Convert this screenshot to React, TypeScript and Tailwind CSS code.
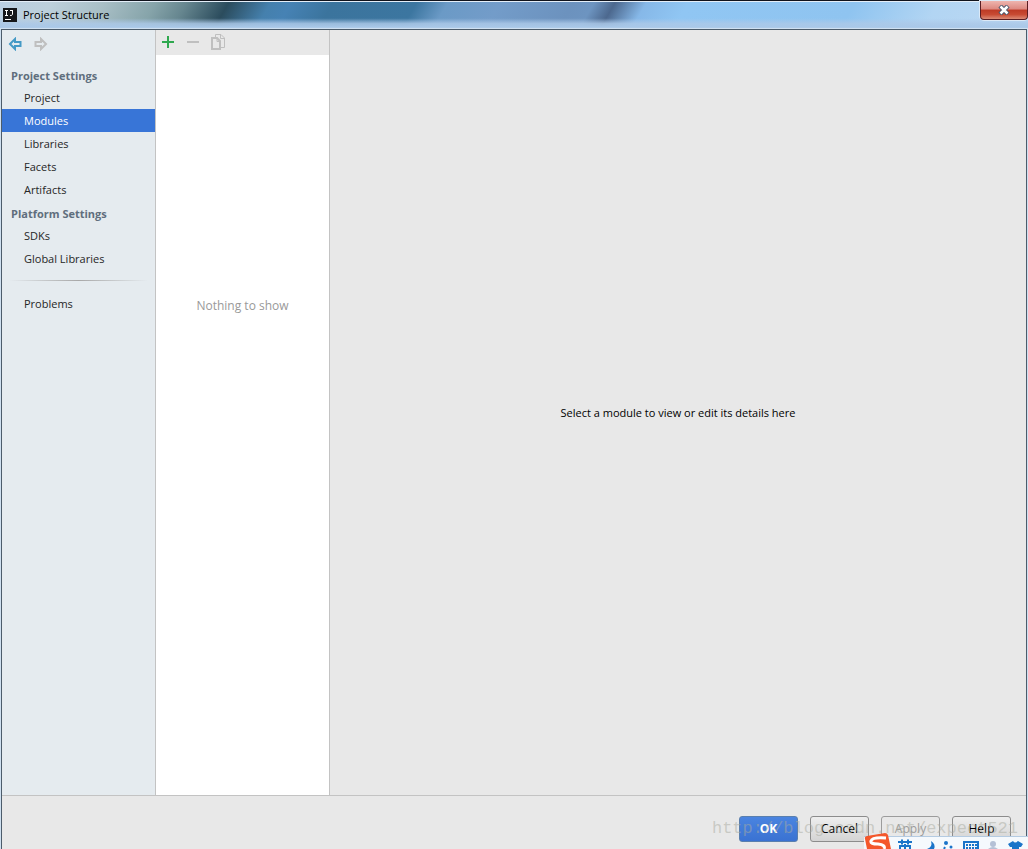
import React, { useState } from 'react'
import clsx from 'clsx'

const projectItems = ['Project', 'Modules', 'Libraries', 'Facets', 'Artifacts']
const platformItems = ['SDKs', 'Global Libraries']

type ItemProps = {
  name: string
  selected: boolean
  onSelect: (name: string) => void
}

const NavItem = ({ name, selected, onSelect }: ItemProps) => (
  <button
    type="button"
    onClick={() => onSelect(name)}
    className={clsx(
      'flex h-[23px] w-full items-center pl-[22px] text-left text-[11px]',
      selected ? 'bg-[#3875d7] text-white' : 'text-[#262626]'
    )}
  >
    {name}
  </button>
)

const NavTitle = ({ children }: { children: React.ReactNode }) => (
  <h2 className="flex h-[23px] items-center pl-[9px] pt-0.5 text-[11px] font-bold text-[#5f6e7d]">
    {children}
  </h2>
)

const ArrowIcon = ({ className }: { className?: string }) => (
  <svg width="14" height="14" viewBox="0 0 14 14" fill="none" className={className}>
    <path
      d="M2 7 L7 2 V5 H12.5 V9 H7 V12 Z"
      stroke="currentColor"
      strokeWidth="2"
      strokeLinejoin="miter"
    />
  </svg>
)

const TitleBar = () => (
  <header className="relative flex h-[29px] shrink-0 items-center border-t border-[#10131c] bg-[linear-gradient(120deg,#b9cfe3_0%,#bdd0db_5%,#a9bfc6_10%,#86a4aa_15%,#66868f_18%,#2b4c5d_22%,#4580ad_26%,#4682b4_28%,#3b749d_32%,#3c76a0_40%,#6b9ac6_43%,#739cc9_48%,#6c92be_55%,#6d94c0_57%,#4c688e_59%,#86b8e8_62%,#90c6f3_66%,#8fc4f0_82%,#b2d5f3_90%,#bdd8f2_100%)]">
    <div className="absolute inset-0 border-t border-[#e4eef8] bg-[linear-gradient(180deg,rgba(255,255,255,0)_60%,rgba(172,201,232,0.85)_80%,#a9c8e8_94%,#e0ebf5_100%)]" />
    <div className="relative flex items-center gap-1.5 pl-[3px]">
      <svg width="14" height="14" viewBox="0 0 14 14">
        <rect width="14" height="14" fill="#15171a" />
        <path d="M2 2.5H5M3.5 2.5V7.5M2 7.5H5M7 2.5H10M9.5 2.5V6.5Q9.5 7.5 7 7.5" stroke="#fff" fill="none" />
        <path d="M2 11.5H8" stroke="#fff" />
      </svg>
      <h1 className="text-[11px] text-black">Project Structure</h1>
    </div>
    <button
      type="button"
      aria-label="Close"
      className="absolute right-0 top-0 flex h-[19px] w-12 items-center justify-center rounded-b border border-t-0 border-[#5a1d22] bg-[linear-gradient(180deg,#eeb5ae_0%,#dd8880_45%,#bd3a25_50%,#c84b33_75%,#dc8b76_100%)] shadow-[0_0_0_1px_#dce9f6]"
    >
      <svg width="12" height="10" viewBox="0 0 12 10">
        <path d="M2 1 L10 9 M10 1 L2 9" stroke="#46556b" strokeWidth="4.5" />
        <path d="M2.5 1.5 L9.5 8.5 M9.5 1.5 L2.5 8.5" stroke="#fff" strokeWidth="2.5" />
      </svg>
    </button>
  </header>
)

const InputBar = () => (
  <div className="absolute bottom-0 right-0 h-4 w-[164px] overflow-hidden">
    <div className="mt-[3px] h-[13px] border-t border-[#b4cbe2] bg-[#f5f9fd]" />
    <svg width="164" height="16" viewBox="0 0 164 16" className="absolute left-0 top-0">
      <path d="M1 6 Q0 4 3 3 L21 0 Q23 0 24 2 L27 16 H3 Z" fill="#f4572b" />
      <path d="M22 5 Q8 4 7 8 Q6 11 14 11 Q22 12 20 16" fill="none" stroke="#fff" strokeWidth="3" />
      <g stroke="#1b74c9" strokeWidth="2" fill="none">
        <path d="M34 9H48M38 6.5V11.5M44 6.5V11.5M36 16V13H46V16M41 11V16" />
      </g>
      <path d="M67 8 Q72 11 70 16 H63 Q69 14 67 8Z" fill="#1b74c9" />
      <circle cx="82" cy="10" r="2" fill="#1b74c9" />
      <circle cx="87" cy="14" r="1.5" fill="#1b74c9" />
      <path d="M81 14 L80 16" stroke="#1b74c9" strokeWidth="2" />
      <rect x="100" y="9" width="14" height="9" fill="none" stroke="#1b74c9" strokeWidth="2" />
      <path d="M102 12H113M102 15H113" stroke="#1b74c9" strokeWidth="2" strokeDasharray="2 1" />
      <circle cx="129" cy="11" r="3" fill="#b4c0d6" />
      <path d="M124 16 Q129 12 134 16Z" fill="#b4c0d6" />
      <path d="M149 8 L144 11 L146 14 H148 V16 H155 V14 H157 L159 11 L154 8 Q151 11 149 8Z" fill="#1b74c9" />
    </svg>
  </div>
)

const buttonBase = 'h-[26px] w-[59px] rounded-[3px] border'
const buttonPlain = 'border-[#8c8c8c] bg-linear-to-b from-[#eeeeee] to-[#d4d4d4] text-black'

const App = () => {
  const [selected, setSelected] = useState('Modules')

  return (
    <div className="relative flex min-h-screen flex-col overflow-hidden bg-[#cfe0f0] font-['Open_Sans',sans-serif] text-[12px] leading-4">
      <TitleBar />

      <div className="mx-px flex flex-1 flex-col border-x border-t border-[#4c5c6b] bg-[#e8e8e8]">
        <div className="flex flex-1 border-b border-[#c3c3c3]">
          <aside className="w-[154px] shrink-0 border-r border-[#c3c3c3] bg-[#e5ebef]">
            <div className="flex h-[33px] items-start gap-3 pl-1.5 pt-[7px]">
              <button type="button" aria-label="Back">
                <ArrowIcon className="text-[#459ac6]" />
              </button>
              <button type="button" aria-label="Forward" disabled>
                <ArrowIcon className="rotate-180 text-[#bfbfbf]" />
              </button>
            </div>
            <nav>
              <NavTitle>Project Settings</NavTitle>
              {projectItems.map((name) => (
                <NavItem key={name} name={name} selected={name === selected} onSelect={setSelected} />
              ))}
              <NavTitle>Platform Settings</NavTitle>
              {platformItems.map((name) => (
                <NavItem key={name} name={name} selected={name === selected} onSelect={setSelected} />
              ))}
              <div className="mx-[7px] mb-[11px] mt-2.5 h-px bg-linear-to-r from-transparent via-[#a8a8a8] to-transparent" />
              <NavItem name="Problems" selected={selected === 'Problems'} onSelect={setSelected} />
            </nav>
          </aside>

          <section className="flex w-[174px] shrink-0 flex-col border-r border-[#c3c3c3] bg-white">
            <div className="flex h-[25px] items-center gap-[11px] bg-[#e8e8e8] pb-0.5 pl-[5px]">
              <button type="button" aria-label="Add">
                <svg width="14" height="14" viewBox="0 0 14 14">
                  <path d="M1 7H13M7 1V13" stroke="#2fa84f" strokeWidth="2" />
                </svg>
              </button>
              <button type="button" aria-label="Remove" disabled>
                <svg width="14" height="14" viewBox="0 0 14 14">
                  <path d="M1 7H13" stroke="#bfbfbf" strokeWidth="2" />
                </svg>
              </button>
              <button type="button" aria-label="Copy" disabled>
                <svg width="14" height="16" viewBox="0 0 14 16" fill="none" stroke="#bfbfbf">
                  <path d="M1 4H6L9 7V15H1Z" strokeWidth="2" />
                  <path d="M4.5 3V0.5H10L13.5 4V13.5H10M9.5 1V4.5H13M6 3V7.5H9" />
                </svg>
              </button>
            </div>
            <p className="pt-[243px] text-center text-[#999999]">Nothing to show</p>
          </section>

          <main className="flex flex-1 items-center justify-center text-[11px] text-black">
            Select a module to view or edit its details here
          </main>
        </div>

        <footer className="flex h-[53px] shrink-0 items-start justify-end gap-3 pr-[15px] pt-5">
          <button type="button" className={clsx(buttonBase, 'border-[#5a7fae] bg-linear-to-b from-[#4a84e0] to-[#3a72d2] font-bold text-white')}>
            OK
          </button>
          <button type="button" className={clsx(buttonBase, buttonPlain)}>
            Cancel
          </button>
          <button type="button" disabled className={clsx(buttonBase, 'border-[#9c9c9c] text-[#9b9b9b]')}>
            Apply
          </button>
          <button type="button" className={clsx(buttonBase, buttonPlain)}>
            Help
          </button>
        </footer>
      </div>

      <p className="pointer-events-none absolute bottom-2 right-2.5 font-['Liberation_Mono',monospace] text-[17px] leading-6 text-[#a8aba0]/50">
        http://blog.csdn.net/expect521
      </p>
      <InputBar />
    </div>
  )
}

export default App
